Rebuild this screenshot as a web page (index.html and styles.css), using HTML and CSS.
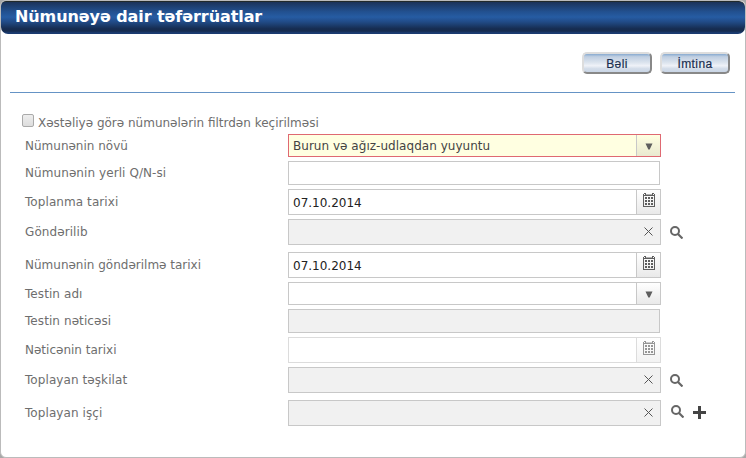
FILE: index.html
```html
<!DOCTYPE html>
<html lang="az">
<head>
<meta charset="utf-8">
<title>Nümunəyə dair təfərrüatlar</title>
<link rel="stylesheet" href="styles.css">
</head>
<body>
<svg class="defs" width="0" height="0" aria-hidden="true">
  <symbol id="calendar" viewBox="0 0 12 14">
    <path fill="currentColor" fill-rule="evenodd" d="M0 1h1V0h2v1h6V0h2v1h1v13H0zM1 3v10h10V3z"/>
    <path fill="#fff" d="M1 1h1v1H1zM10 1h1v1h-1zM3 1h6v.5H3z"/>
    <path fill="currentColor" d="M2 4h2v2H2zM5 4h2v2H5zM8 4h2v2H8zM2 7h2v2H2zM5 7h2v2H5zM8 7h2v2H8zM2 10h2v2H2zM5 10h2v2H5zM8 10h2v2H8z"/>
  </symbol>
  <symbol id="arrow" viewBox="0 0 8 7"><path fill="currentColor" d="M.5.5h7L4.700 6.500H3.300z"/></symbol>
  <symbol id="cross" viewBox="0 0 9 9"><path fill="none" stroke="#555" stroke-width="1" d="M.5.5l8 8M8.500.5l-8 8"/></symbol>
  <symbol id="search" viewBox="0 0 13 13"><circle cx="5" cy="5" r="4" fill="none" stroke="#666" stroke-width="2"/><path stroke="#666" stroke-width="2.2" d="M8 8l4.500 4.500"/></symbol>
  <symbol id="plus" viewBox="0 0 13 13"><path fill="#444" d="M5 0h3v5h5v3H8v5H5V8H0V5h5z"/></symbol>
</svg>
<div class="dialog">
  <header class="title"><span>Nümunəyə dair təfərrüatlar</span></header>
  <div class="actions"><button>Bəli</button><button>İmtina</button></div>
  <form class="form">
    <div class="filter"><span class="check"></span><span class="filter-text">Xəstəliyə görə nümunələrin filtrdən keçirilməsi</span></div>
    <div class="row short"><label class="plain">Nümunənin növü</label><div class="field required"><span class="value">Burun və ağız-udlaqdan yuyuntu</span><span class="trigger"><svg class="arrow"><use href="#arrow"/></svg></span></div></div>
    <div class="row text"><label>Nümunənin yerli Q/N-si</label><div class="field"></div></div>
    <div class="row"><label>Toplanma tarixi</label><div class="field"><span class="value">07.10.2014</span><span class="trigger"><svg class="calendar"><use href="#calendar"/></svg></span></div></div>
    <div class="row wide"><label>Göndərilib</label><div class="field readonly"><svg class="cross"><use href="#cross"/></svg></div><svg class="icon"><use href="#search"/></svg></div>
    <div class="row"><label class="plain">Nümunənin göndərilmə tarixi</label><div class="field"><span class="value">07.10.2014</span><span class="trigger"><svg class="calendar"><use href="#calendar"/></svg></span></div></div>
    <div class="row short"><label>Testin adı</label><div class="field"><span class="value"></span><span class="trigger"><svg class="arrow"><use href="#arrow"/></svg></span></div></div>
    <div class="row text"><label>Testin nəticəsi</label><div class="field readonly"></div></div>
    <div class="row"><label class="plain">Nəticənin tarixi</label><div class="field disabled"><span class="value"></span><span class="trigger"><svg class="calendar"><use href="#calendar"/></svg></span></div></div>
    <div class="row wide"><label>Toplayan təşkilat</label><div class="field readonly"><svg class="cross"><use href="#cross"/></svg></div><svg class="icon"><use href="#search"/></svg></div>
    <div class="row person"><label>Toplayan işçi</label><div class="field readonly"><svg class="cross"><use href="#cross"/></svg></div><svg class="icon"><use href="#search"/></svg><svg class="icon"><use href="#plus"/></svg></div>
  </form>
</div>
</body>
</html>
```
FILE: styles.css
```css
* { box-sizing: border-box; }
body { margin: 0; background: #a8a8a8; font: 12px/16px "DejaVu Sans", sans-serif; color: #6e6e6e; }
svg { display: block; flex: none; }
.defs { position: absolute; }
.dialog { width: 746px; height: 458px; border: 1px solid #bbb; border-radius: 6px; background: #fff; overflow: hidden; }
.title { height: 33px; padding: 5px 0 0 14px; border-radius: 4px 6px 7px 7px; border-top: 1px solid #222a2b; background: linear-gradient(#1c3359 0, #22508f 30%, #265ca3 47%, #214b87 62%, #162c50 84%, #162c50 91%, #1b3b70 96%); color: #fff; font-size: 16px; font-weight: bold; line-height: 20px; }
.title span { letter-spacing: -.08px; }
.actions { display: flex; justify-content: flex-end; gap: 8px; height: 59px; margin: 0 10px 0 9px; padding: 18px 5px 0 0; border-bottom: 1px solid #6593c5; }
button { width: 70px; height: 22px; padding: 3px 0 0; border: 2px solid; border-color: #ddd #888 #888 #ddd; border-radius: 5px; background: linear-gradient(#87aad0 0, #bfcee1 15%, #dce4ee 48%, #eff2f8 65%, #d5deea 80%, #c8d5e5); color: #1a2e50; font: 12px/15px "Liberation Sans", sans-serif; letter-spacing: .4px; -webkit-text-stroke: .2px #1a2e50; }
.filter { display: flex; height: 41px; padding: 21px 0 0 21px; white-space: nowrap; }
.check { width: 12px; height: 13px; border: 1px solid #aaa; border-radius: 2px; background: linear-gradient(#eee, #ddd); }
.filter-text { margin-left: 4px; line-height: 18px; }
.row { display: flex; height: 26px; margin-bottom: 4px; padding-left: 24px; }
.row.short { height: 23px; }
.row.text { height: 24px; }
.row.wide { margin-bottom: 7px; }
label { width: 263px; padding-top: 5px; letter-spacing: .08px; white-space: nowrap; }
label.plain { letter-spacing: 0; }
.short label, .text label { padding-top: 4px; }
.field { display: flex; width: 373px; border: 1px solid #c8c8c8; background: #fff; }
.text .field { width: 372px; }
.value { flex: 1; padding: 5px 0 0 4px; color: #222; white-space: nowrap; }
.short .value { padding-top: 3px; }
.trigger { width: 24px; padding-left: 6px; border-left: 1px solid #c8c8c8; background: linear-gradient(#fff, #e9e9e9); color: #5e5e5e; }
.required { border-color: #df6972; background: #ffffe1; }
.required .value { color: #444; letter-spacing: .03px; }
.required .trigger { background: linear-gradient(#ffffe1, #e9e9d0); }
.readonly { justify-content: flex-end; background: #f1f1f1; }
.disabled { border-color: #dcdcdc; }
.disabled .trigger { border-color: #dcdcdc; background: linear-gradient(#fff, #f3f3f3); color: #969696; }
.calendar { width: 12px; height: 14px; margin-top: 3px; }
.arrow { width: 8px; height: 7px; margin: 8px 0 0 2px; }
.cross { width: 9px; height: 9px; margin: 7px 7px 0 0; }
.icon { width: 13px; height: 13px; margin: 7px 0 0 9px; }
.person .icon { margin: 5px 0 0 10px; }
.person .icon + .icon { margin: 6px 0 0 9px; }
```
